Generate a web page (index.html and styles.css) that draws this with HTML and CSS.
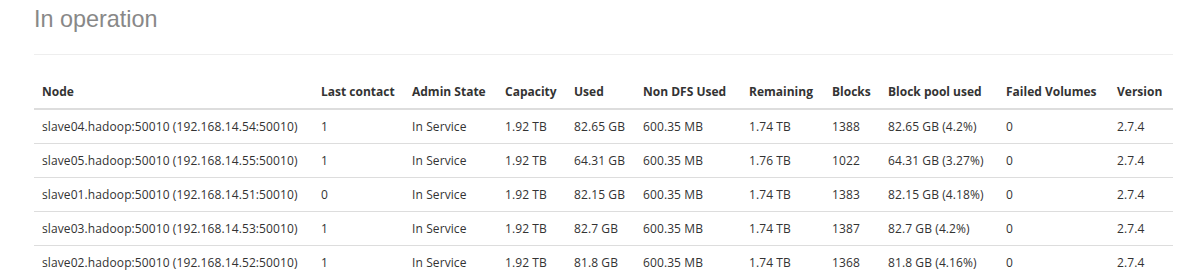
FILE: index.html
```html
<!DOCTYPE html>
<html>
<head>
<meta charset="utf-8">
<link rel="stylesheet" href="styles.css">
</head>
<body>
<div class="container">
  <div class="page-header"><h1><small>In operation</small></h1></div>
  <table class="table">
    <colgroup>
      <col class="c-node"><col class="c-contact"><col class="c-admin"><col class="c-cap"><col class="c-used"><col class="c-nondfs"><col class="c-rem"><col class="c-blocks"><col class="c-pool"><col class="c-failed"><col class="c-ver">
    </colgroup>
    <thead>
      <tr><th>Node</th><th>Last contact</th><th>Admin State</th><th>Capacity</th><th>Used</th><th>Non DFS Used</th><th>Remaining</th><th>Blocks</th><th>Block pool used</th><th>Failed Volumes</th><th>Version</th></tr>
    </thead>
    <tbody>
      <tr><td>slave04.hadoop:50010 (192.168.14.54:50010)</td><td>1</td><td>In Service</td><td>1.92 TB</td><td>82.65 GB</td><td>600.35 MB</td><td>1.74 TB</td><td>1388</td><td>82.65 GB (4.2%)</td><td>0</td><td>2.7.4</td></tr>
      <tr><td>slave05.hadoop:50010 (192.168.14.55:50010)</td><td>1</td><td>In Service</td><td>1.92 TB</td><td>64.31 GB</td><td>600.35 MB</td><td>1.76 TB</td><td>1022</td><td>64.31 GB (3.27%)</td><td>0</td><td>2.7.4</td></tr>
      <tr><td>slave01.hadoop:50010 (192.168.14.51:50010)</td><td>0</td><td>In Service</td><td>1.92 TB</td><td>82.15 GB</td><td>600.35 MB</td><td>1.74 TB</td><td>1383</td><td>82.15 GB (4.18%)</td><td>0</td><td>2.7.4</td></tr>
      <tr><td>slave03.hadoop:50010 (192.168.14.53:50010)</td><td>1</td><td>In Service</td><td>1.92 TB</td><td>82.7 GB</td><td>600.35 MB</td><td>1.74 TB</td><td>1387</td><td>82.7 GB (4.2%)</td><td>0</td><td>2.7.4</td></tr>
      <tr><td>slave02.hadoop:50010 (192.168.14.52:50010)</td><td>1</td><td>In Service</td><td>1.92 TB</td><td>81.8 GB</td><td>600.35 MB</td><td>1.74 TB</td><td>1368</td><td>81.8 GB (4.16%)</td><td>0</td><td>2.7.4</td></tr>
    </tbody>
  </table>
</div>
</body>
</html>
```
FILE: styles.css
```css
html, body {
  margin: 0;
  padding: 0;
  background: #fff;
}
body {
  font-family: "Open Sans", "Noto Sans", sans-serif;
  font-size: 12px;
  line-height: 17px;
  color: #333;
}
.container {
  padding: 0 15px 0 34px;
}
.page-header {
  border-bottom: 1px solid #eee;
  padding: 6px 0 22px;
  margin: 0 0 20px;
}
.page-header h1 {
  margin: 0;
  font-family: "Liberation Sans", Arial, sans-serif;
  font-weight: normal;
  font-size: 23.4px;
  line-height: 26px;
}
.page-header small {
  font-size: inherit;
  color: #888;
}
.table {
  width: 1139px;
  border-collapse: collapse;
  border-spacing: 0;
  table-layout: fixed;
}
.table th,
.table td {
  padding: 8px;
  text-align: left;
  white-space: nowrap;
}
.table th {
  font-weight: bold;
  vertical-align: bottom;
  border-bottom: 2px solid #ddd;
}
.table td {
  vertical-align: top;
  border-top: 1px solid #ddd;
  letter-spacing: 0.1px;
}
.c-node { width: 279px; }
.c-contact { width: 91px; }
.c-admin { width: 93px; }
.c-cap { width: 69px; }
.c-used { width: 69px; }
.c-nondfs { width: 106px; }
.c-rem { width: 83px; }
.c-blocks { width: 56px; }
.c-pool { width: 118px; }
.c-failed { width: 111px; }
.c-ver { width: 64px; }
```
